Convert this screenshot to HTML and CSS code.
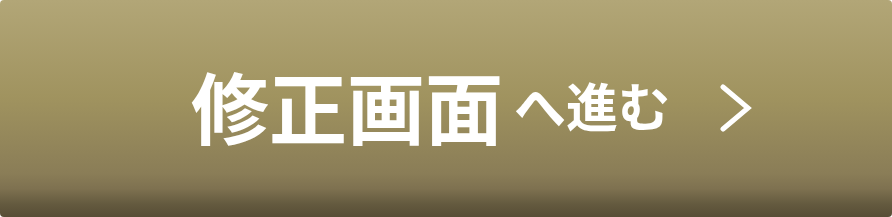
FILE: index.html
```html
<!DOCTYPE html>
<html lang="ja">
<head>
<meta charset="utf-8">
<link rel="stylesheet" href="styles.css">
</head>
<body>
<a class="btn" href="#">
  <span class="main">修正画面</span>
  <span class="sub">へ進む</span>
  <svg class="chev" width="32" height="48" viewBox="0 0 32 48"><path d="M3 3 L28 24 L3 45" fill="none" stroke="#fff" stroke-width="5" stroke-linecap="round" stroke-linejoin="miter"/></svg>
</a>
</body>
</html>
```

FILE: styles.css
```css
html, body {
  margin: 0;
  padding: 0;
  background: #fff;
}
.btn {
  display: flex;
  align-items: center;
  box-sizing: border-box;
  width: 892px;
  height: 217px;
  padding-left: 191px;
  padding-bottom: 8px;
  border-radius: 4px;
  text-decoration: none;
  color: #fff;
  font-family: "Noto Sans CJK JP", "Noto Sans", sans-serif;
  font-weight: bold;
  background: linear-gradient(to bottom, #b2a677 0%, #a0935f 45%, #8a7d57 80%, #7e7150 87%, #645a3f 94%, #574d35 100%);
}
.main {
  font-size: 78px;
  line-height: 1;
}
.sub {
  font-size: 52px;
  line-height: 1;
  margin-left: 11px;
}
.chev {
  margin-left: 50px;
  position: relative;
  top: 3px;
}
```
